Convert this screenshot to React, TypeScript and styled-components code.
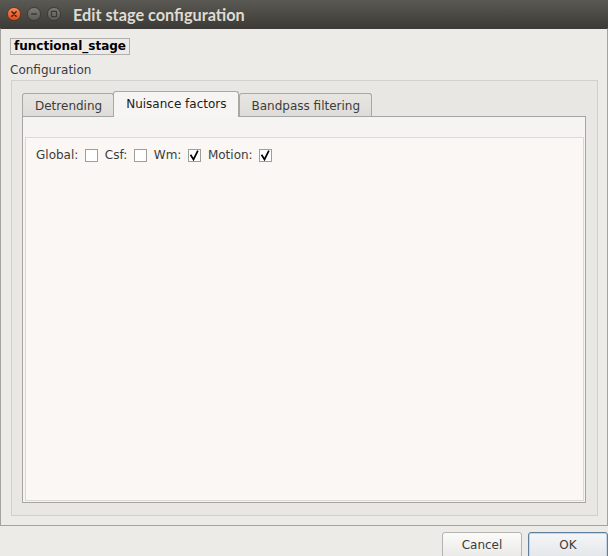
import React from "react";
import styled, { createGlobalStyle } from "styled-components";

const GlobalStyle = createGlobalStyle`
  html, body { margin: 0; padding: 0; background: #edebe8; }
  body {
    font-family: "DejaVu Sans", "Liberation Sans", sans-serif;
    font-size: 12px;
    color: #3c3c3c;
  }
  * { box-sizing: border-box; }
`;

const Window = styled.div`
  width: 608px;
  height: 556px;
  display: flex;
  flex-direction: column;
  overflow: hidden;
  background: #edebe8;
`;

const TitleBar = styled.div`
  height: 28px;
  flex: none;
  display: flex;
  align-items: center;
  padding-left: 7px;
  gap: 6px;
  background: linear-gradient(#5a5953, #3c3b37);
`;

const TitleText = styled.div`
  margin-left: 6px;
  font-family: "Lato", "DejaVu Sans", sans-serif;
  font-weight: 700;
  font-size: 16.3px;
  color: #dfdbd2;
`;

const Frame = styled.div`
  flex: none;
  height: 498px;
  border: 1px solid #a4a29e;
  border-top-color: #3c3b37;
  display: flex;
  flex-direction: column;
  padding: 9px 9px 9px 9px;
`;

const NameLabel = styled.div`
  align-self: flex-start;
  height: 17px;
  line-height: 15px;
  padding: 0 3px;
  border: 1px solid #b1afab;
  font-weight: 700;
  color: #000;
`;

const SectionLabel = styled.div`
  margin-top: 8px;
  line-height: 15px;
  color: #3c3c3c;
`;

const GroupBox = styled.div`
  flex: 1;
  margin-top: 2px;
  margin-left: 1px;
  border: 1px solid #d2d0cc;
  background: #e9e7e4;
  padding: 10px 11px 12px 10px;
  display: flex;
  flex-direction: column;
`;

const TabBar = styled.div`
  display: flex;
  align-items: flex-end;
  height: 26px;
  margin-bottom: -1px;
  position: relative;
  z-index: 1;
`;

const Tab = styled.div<{ $active?: boolean }>`
  height: ${(p) => (p.$active ? "26px" : "24px")};
  padding: 3px 11px 0 12px;
  margin-left: ${(p) => (p.$active ? "-1px" : "0")};
  border: 1px solid #aaa8a4;
  border-bottom: ${(p) => (p.$active ? "none" : "1px solid #a7a5a1")};
  border-radius: 3px 3px 0 0;
  background: ${(p) => (p.$active ? "#f7f5f3" : "linear-gradient(#e8e6e3, #dedcd9)")};
  color: ${(p) => (p.$active ? "#202020" : "#3c3c3c")};
  line-height: 18px;
  white-space: nowrap;
`;

const Pane = styled.div`
  flex: 1;
  border: 1px solid #a7a5a1;
  background: #f6f4f2;
  padding: 20px 1px 1px 2px;
  display: flex;
  flex-direction: column;
`;

const Panel = styled.div`
  flex: 1;
  border: 1px solid #dbd9d5;
  background: #faf7f5;
  padding: 10px 10px;
`;

const OptionRow = styled.div`
  display: flex;
  align-items: center;
  height: 14px;
`;

const OptionLabel = styled.span`
  line-height: 14px;
  color: #3c3c3c;
  margin-right: 6.5px;
`;

const Box = styled.span`
  width: 13px;
  height: 13px;
  flex: none;
  border: 1px solid #a09e9a;
  background: #fff;
  display: inline-flex;
  align-items: center;
  justify-content: center;
  margin-right: 7px;
`;

const ButtonRow = styled.div`
  flex: 1;
  display: flex;
  justify-content: flex-end;
  align-items: flex-start;
  gap: 6px;
  padding-top: 6px;
`;

const Button = styled.button<{ $default?: boolean }>`
  width: 80px;
  height: 27px;
  flex: none;
  font-family: "DejaVu Sans", sans-serif;
  font-size: 12px;
  color: #3c3c3c;
  border-radius: 3px;
  border: 1px solid ${(p) => (p.$default ? "#5d7f9c" : "#b5b3af")};
  background: ${(p) =>
    p.$default
      ? "linear-gradient(#f5f6f7, #e3e6ea)"
      : "linear-gradient(#fbfbfa, #e9e8e6)"};
  box-shadow: ${(p) => (p.$default ? "inset 0 0 0 1px #c8d6e3" : "none")};
  padding: 0 0 2px;
`;

const Check = () => (
  <svg width="11" height="11" viewBox="0 0 11 11">
    <polyline points="2,5.5 4.5,9.5 8.5,1.5" fill="none" stroke="#000" strokeWidth="1.7" strokeLinecap="square" strokeLinejoin="miter" />
  </svg>
);

const CheckBox = ({ checked }: { checked?: boolean }) => <Box>{checked ? <Check /> : null}</Box>;

const WinButton = ({ kind }: { kind: "close" | "min" | "max" }) => (
  <svg width="14" height="14" viewBox="0 0 15 15">
    <defs>
      <linearGradient id={`g-${kind}`} x1="0" y1="0" x2="0" y2="1">
        {kind === "close" ? (
          <>
            <stop offset="0" stopColor="#f68a5c" />
            <stop offset="1" stopColor="#df4a16" />
          </>
        ) : (
          <>
            <stop offset="0" stopColor="#7d7c76" />
            <stop offset="1" stopColor="#5b5a55" />
          </>
        )}
      </linearGradient>
    </defs>
    <circle cx="7.5" cy="7.5" r="7" fill={`url(#g-${kind})`} stroke={kind === "close" ? "#5a2a18" : "#33322e"} strokeWidth="0.8" />
    {kind === "close" && (
      <path d="M5.2 5.2 L9.8 9.8 M9.8 5.2 L5.2 9.8" stroke="#3b1d12" strokeWidth="1.5" strokeLinecap="round" />
    )}
    {kind === "min" && <path d="M4.5 7.5 H10.5" stroke="#3a3935" strokeWidth="1.6" />}
    {kind === "max" && <rect x="4.8" y="4.8" width="5.4" height="5.4" fill="none" stroke="#3a3935" strokeWidth="1.3" rx="0.5" />}
  </svg>
);

export default function App() {
  return (
    <>
      <GlobalStyle />
      <Window>
        <TitleBar>
          <WinButton kind="close" />
          <WinButton kind="min" />
          <WinButton kind="max" />
          <TitleText>Edit stage configuration</TitleText>
        </TitleBar>
        <Frame>
          <NameLabel>functional_stage</NameLabel>
          <SectionLabel>Configuration</SectionLabel>
          <GroupBox>
            <TabBar>
              <Tab>Detrending</Tab>
              <Tab $active>Nuisance factors</Tab>
              <Tab>Bandpass filtering</Tab>
            </TabBar>
            <Pane>
              <Panel>
                <OptionRow>
                  <OptionLabel>Global:</OptionLabel>
                  <CheckBox />
                  <OptionLabel>Csf:</OptionLabel>
                  <CheckBox />
                  <OptionLabel>Wm:</OptionLabel>
                  <CheckBox checked />
                  <OptionLabel>Motion:</OptionLabel>
                  <CheckBox checked />
                </OptionRow>
              </Panel>
            </Pane>
          </GroupBox>
        </Frame>
        <ButtonRow>
          <Button>Cancel</Button>
          <Button $default>OK</Button>
        </ButtonRow>
      </Window>
    </>
  );
}
